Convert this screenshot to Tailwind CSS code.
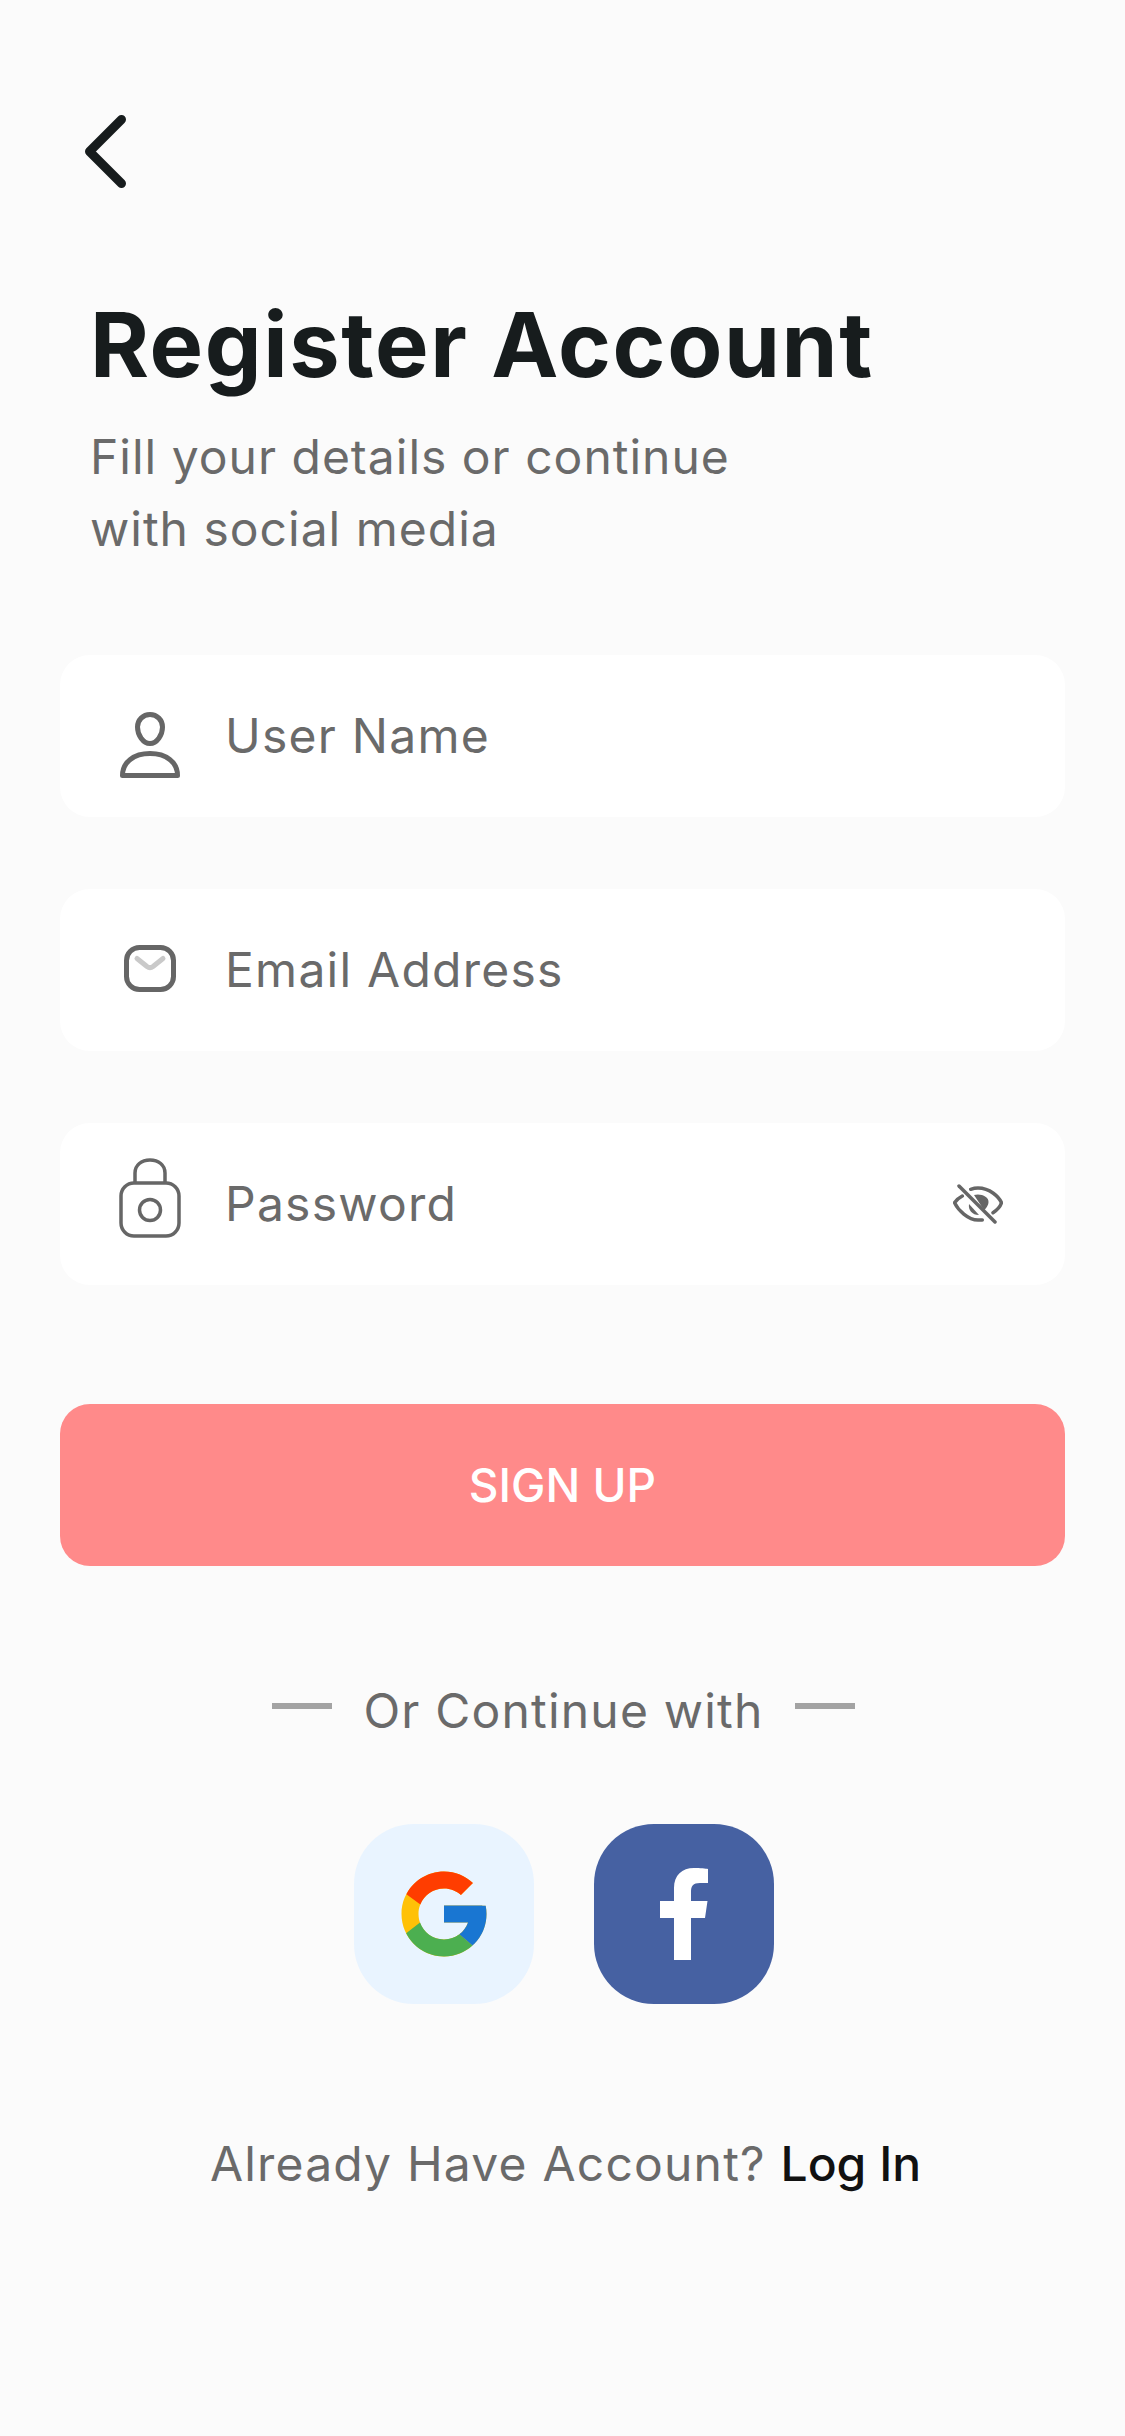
<!DOCTYPE html>
<html lang="en">
<head>
    <meta charset="UTF-8">
    <meta name="viewport" content="width=device-width, initial-scale=1.0">
    <title>Register Account</title>
    <script src="https://cdn.jsdelivr.net/npm/@tailwindcss/browser@4"></script>
</head>
<body class="bg-[#fbfbfb] min-h-screen font-['Inter',sans-serif]">
    <div class="w-[1125px] h-[2436px] px-[60px] pt-[115px]">
        <!-- back -->
        <svg class="ml-[25px] block" width="41" height="73" viewBox="0 0 41 73" fill="none">
            <path d="M36.500 4.500L4.500 36.500L36.500 68.500" stroke="#171c1d" stroke-width="9" stroke-linecap="round" stroke-linejoin="round"/>
        </svg>

        <h1 class="mt-[107px] ml-[30px] text-[90px] leading-[100px] font-bold text-[#171c1d] tracking-[1.6px]">Register Account</h1>
        <p class="mt-[26px] ml-[30px] text-[48px] leading-[72px] text-[#6a6a6a] tracking-[1px] w-[800px]">Fill your details or continue<br>with social media</p>

        <form class="mt-[90px]">
            <div class="flex flex-col gap-[72px]">
                <div class="h-[162px] rounded-[30px] bg-white flex items-center">
                    <div class="w-[180px] -mr-[15px] shrink-0 flex justify-center">
                        <svg class="translate-y-[9px]" width="60" height="66" viewBox="0 0 60 66" fill="none" stroke="#666666" stroke-width="5">
                            <path d="M30 2.500C37 2.500 42.500 8 42.500 15C42.500 23 37 31.500 30 31.500C23 31.500 17.500 23 17.500 15C17.500 8 23 2.500 30 2.500Z"/>
                            <path d="M2.500 63.500C2.500 50 14 41.500 30 41.500C46 41.500 57.500 50 57.500 63.500Z" stroke-linejoin="round"/>
                        </svg>
                    </div>
                    <span class="text-[48px] tracking-[1.25px] text-[#6a6a6a]">User Name</span>
                </div>
                <div class="h-[162px] rounded-[30px] bg-white flex items-center">
                    <div class="w-[180px] -mr-[15px] shrink-0 flex justify-center">
                        <svg class="-translate-y-[2px]" width="52" height="47" viewBox="0 0 52 47" fill="none">
                            <path d="M13 13.500L23 21.500C25 23 27 23 29 21.500L39 13.500" stroke="#c9c9c9" stroke-width="5" stroke-linecap="round" stroke-linejoin="round"/>
                            <rect x="2.500" y="2.500" width="47" height="42" rx="13" stroke="#666666" stroke-width="5"/>
                        </svg>
                    </div>
                    <span class="text-[48px] tracking-[1.25px] text-[#6a6a6a]">Email Address</span>
                </div>
                <div class="h-[162px] rounded-[30px] bg-white flex items-center">
                    <div class="w-[180px] -mr-[15px] shrink-0 flex justify-center">
                        <svg class="-translate-y-[6px]" width="62" height="80" viewBox="0 0 62 80" fill="none" stroke="#666666" stroke-width="3.500">
                            <path d="M16 25V15C16 7 22.500 2 31 2C39.500 2 46 7 46 15V25"/>
                            <rect x="2" y="25" width="58" height="53" rx="13"/>
                            <circle cx="31" cy="52" r="10.500"/>
                        </svg>
                    </div>
                    <span class="text-[48px] tracking-[1.25px] text-[#6a6a6a]">Password</span>
                    <svg class="ml-auto mr-[62px]" width="50" height="40" viewBox="0 0 50 40" fill="none" stroke="#666666" stroke-width="3.500" stroke-linecap="round">
                        <path d="M17.700 5.300C20 4.500 22.500 4 25 4C37 4 46 13 48.500 18.700C47.500 22 44 26 40 28.700"/>
                        <path d="M9.300 12C5.500 14 3 16.500 1.500 18.700C5 26 15 36 25 36C26.500 36 28 36 29.300 36"/>
                        <path d="M21 11C28 9 36 13 35.500 18C35.500 21 33 25 31 26Z" fill="#666666" stroke="none"/>
                        <path d="M16 20C15 26 19 31 26 31Z" fill="#666666" stroke="none"/>
                        <path d="M6 2L42 38"/>
                    </svg>
                </div>
            </div>

            <button type="button" class="mt-[119px] w-full h-[162px] rounded-[30px] bg-[#ff8a8a] text-white text-[46px] font-medium">SIGN UP</button>
        </form>

        <div class="mt-[113px] pl-[2px] flex items-center justify-center gap-[31px]">
            <span class="w-[60px] h-[6px] bg-[#a3a3a3] -translate-y-[5px]"></span>
            <span class="text-[48px] leading-[64px] tracking-[1.2px] text-[#6a6a6a]">Or Continue with</span>
            <span class="w-[60px] h-[6px] bg-[#a3a3a3] -translate-y-[5px]"></span>
        </div>

        <div class="mt-[81px] pl-[3px] flex justify-center gap-[60px]">
            <a class="w-[180px] h-[180px] rounded-[60px] bg-[#e9f4ff] flex items-center justify-center">
                <svg width="102" height="102" viewBox="0 0 48 48">
                    <path fill="#FFC107" d="M43.611,20.083H42V20H24v8h11.303c-1.649,4.657-6.08,8-11.303,8c-6.627,0-12-5.373-12-12c0-6.627,5.373-12,12-12c3.059,0,5.842,1.154,7.961,3.039l5.657-5.657C34.046,6.053,29.268,4,24,4C12.955,4,4,12.955,4,24c0,11.045,8.955,20,20,20c11.045,0,20-8.955,20-20C44,22.659,43.862,21.35,43.611,20.083z"/>
                    <path fill="#FF3D00" d="M6.306,14.691l6.571,4.819C14.655,15.108,18.961,12,24,12c3.059,0,5.842,1.154,7.961,3.039l5.657-5.657C34.046,6.053,29.268,4,24,4C16.318,4,9.656,8.337,6.306,14.691z"/>
                    <path fill="#4CAF50" d="M24,44c5.166,0,9.86-1.977,13.409-5.192l-6.19-5.238C29.211,35.091,26.715,36,24,36c-5.202,0-9.619-3.317-11.283-7.946l-6.522,5.025C9.505,39.556,16.227,44,24,44z"/>
                    <path fill="#1976D2" d="M43.611,20.083H42V20H24v8h11.303c-0.792,2.237-2.231,4.166-4.087,5.571c0.001-0.001,0.002-0.001,0.003-0.002l6.19,5.238C36.971,39.205,44,34,44,24C44,22.659,43.862,21.35,43.611,20.083z"/>
                </svg>
            </a>
            <a class="w-[180px] h-[180px] rounded-[60px] bg-[#4661a2] flex items-center justify-center">
                <svg width="48" height="92" viewBox="0 0 48 92">
                    <path fill="#fff" d="M14 92V50H0V33H14V20C14 7 22 0 34 0C40 0 46 0.500 48 1V15H40C33 15 31 18 31 24V33H47.500L45 50H31V92Z"/>
                </svg>
            </a>
        </div>

        <p class="mt-[128px] pl-[6px] text-center text-[48px] leading-[64px] tracking-[1.2px] text-[#6a6a6a]">Already Have Account? <span class="text-[#111111] font-medium tracking-normal">Log In</span></p>
    </div>
</body>
</html>
